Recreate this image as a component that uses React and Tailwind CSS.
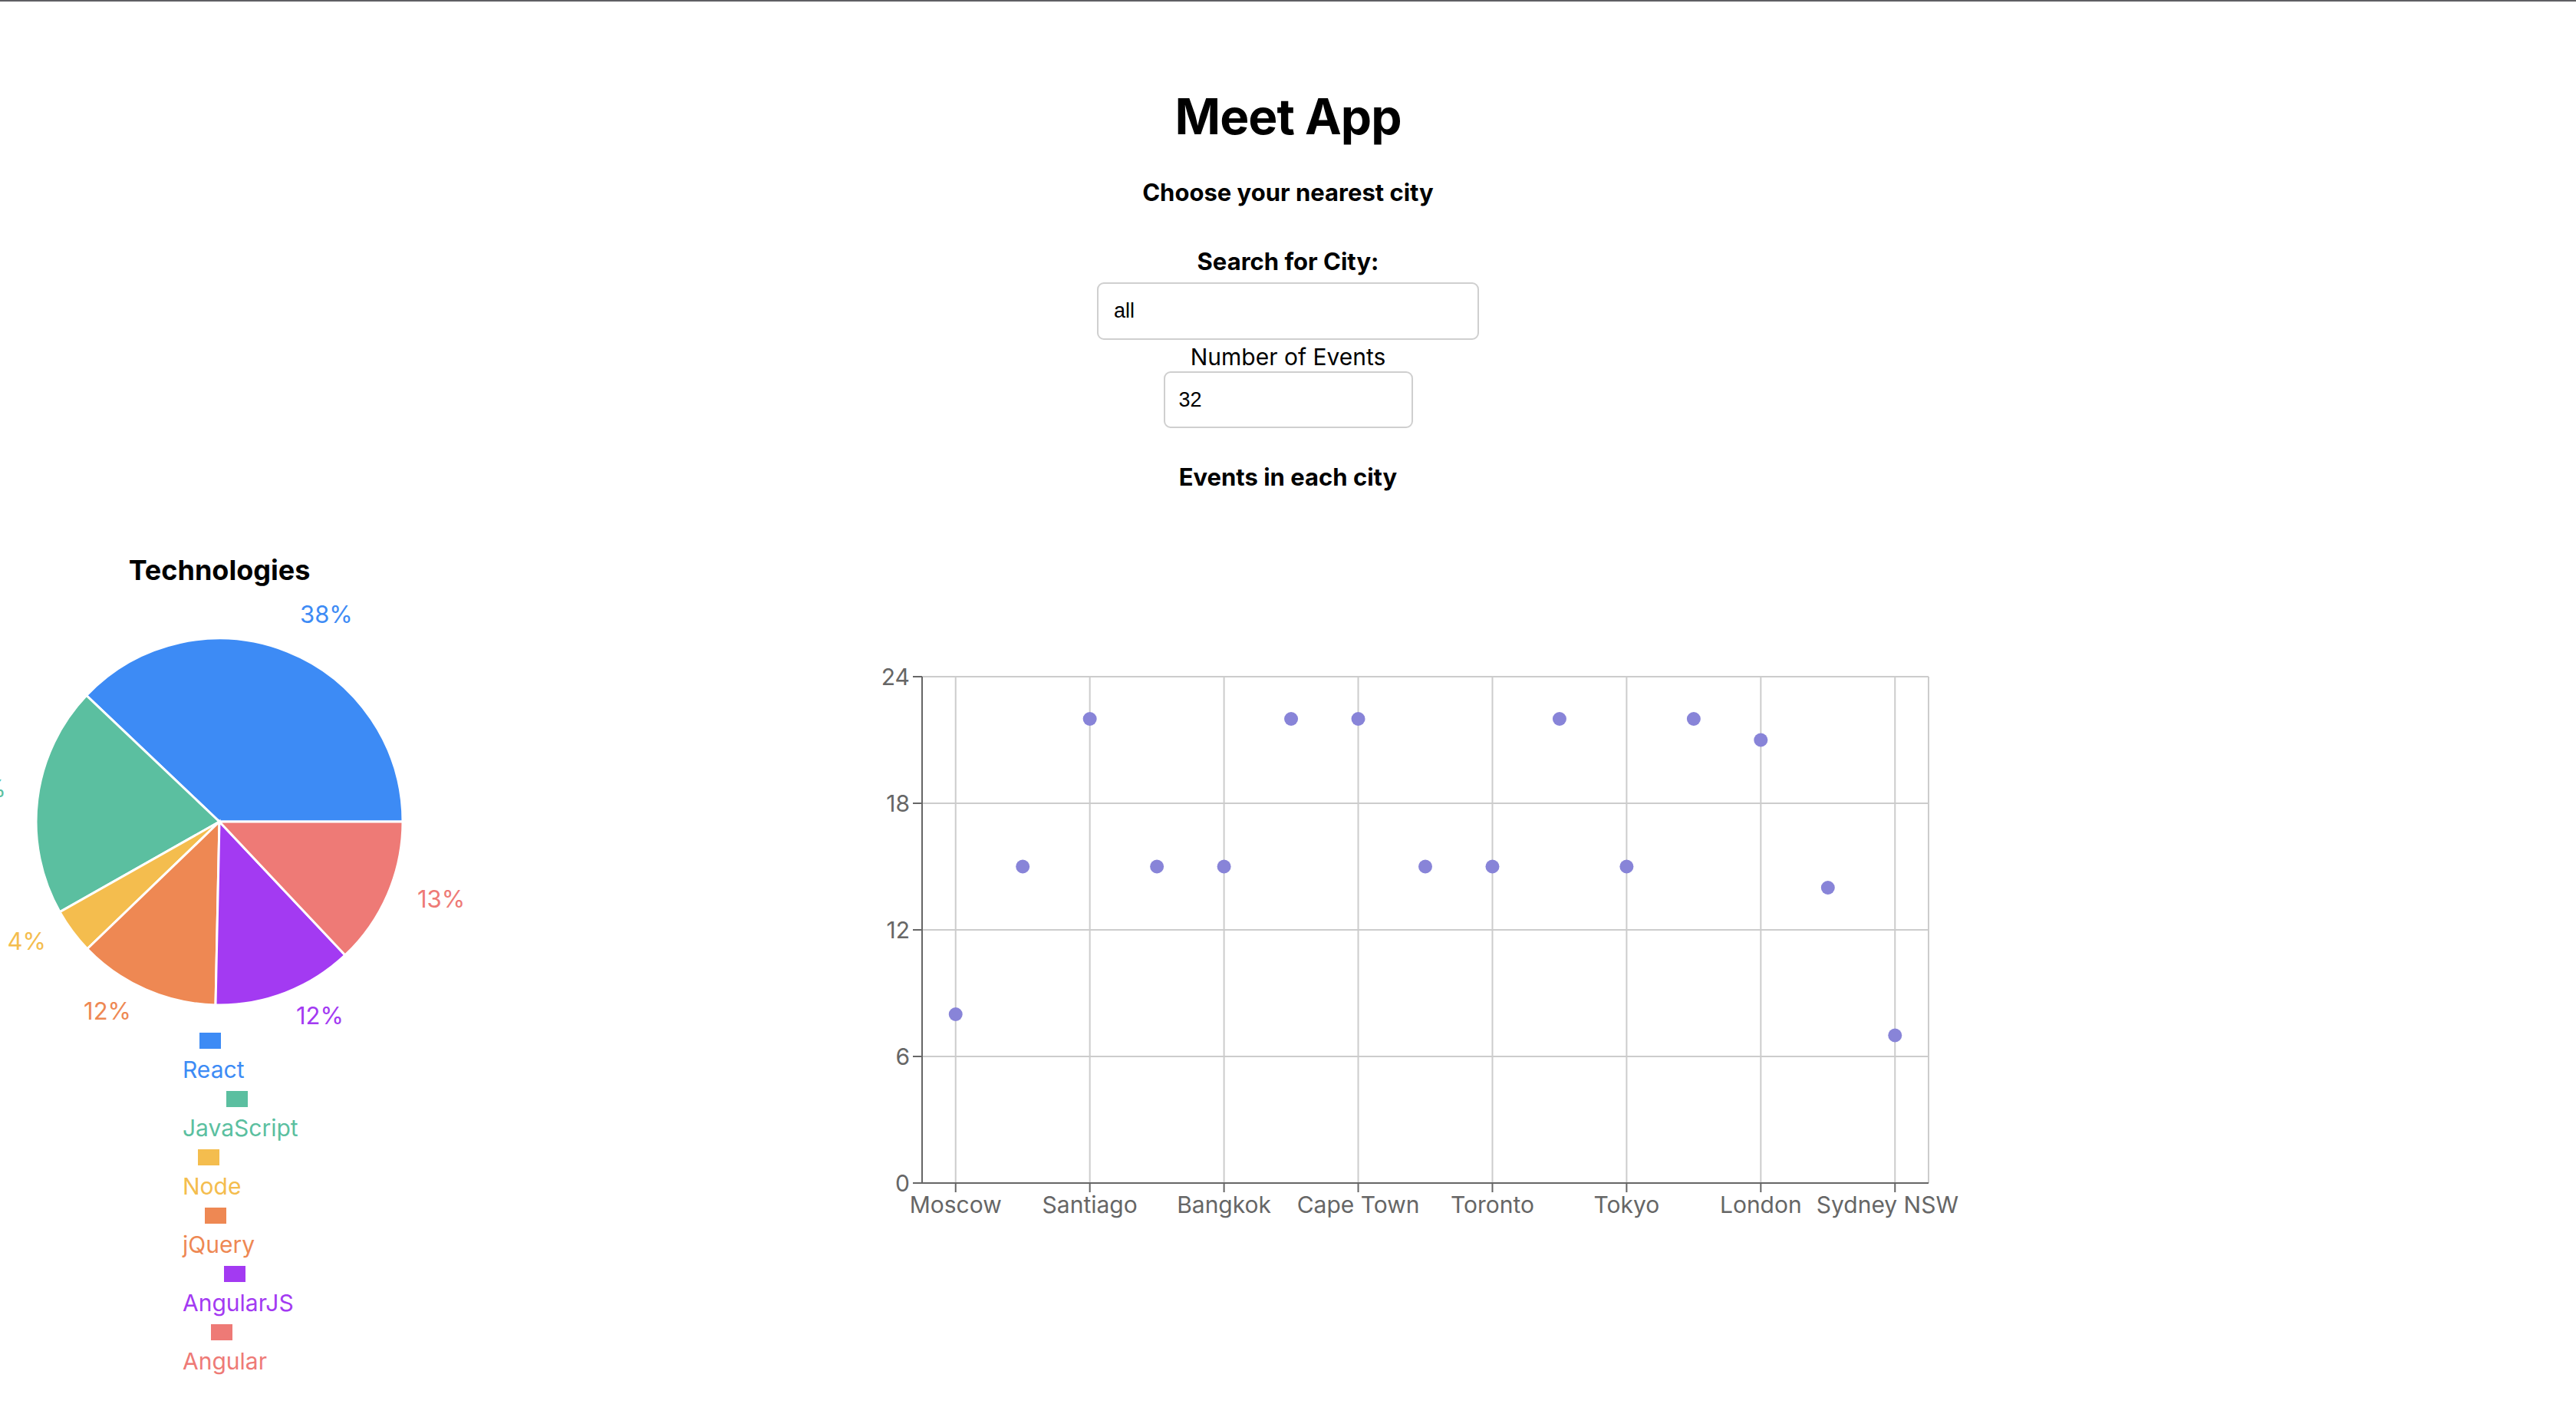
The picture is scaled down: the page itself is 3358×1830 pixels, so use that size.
import React from 'react';

const slices = [
  { name: 'React', pct: '38%', color: '#3d8bf5', from: 0, to: 136.5, lx: 391, ly: 35, anchor: 'start' },
  { name: 'JavaScript', pct: '21%', color: '#5bbfa0', from: 136.5, to: 209.5, lx: 8, ly: 262, anchor: 'end' },
  { name: 'Node', pct: '4%', color: '#f4bd4e', from: 209.5, to: 223.9, lx: 60, ly: 461, anchor: 'end' },
  { name: 'jQuery', pct: '12%', color: '#ee8853', from: 223.9, to: 268.8, lx: 171, ly: 552, anchor: 'end' },
  { name: 'AngularJS', pct: '12%', color: '#a33af2', from: 268.8, to: 313.3, lx: 386, ly: 558, anchor: 'start' },
  { name: 'Angular', pct: '13%', color: '#ee7a76', from: 313.3, to: 360, lx: 544, ly: 406, anchor: 'start' },
];

const cities = [
  { city: 'Moscow', count: 8 },
  { city: 'Berlin', count: 15 },
  { city: 'Santiago', count: 22 },
  { city: 'Dubai', count: 15 },
  { city: 'Bangkok', count: 15 },
  { city: 'Toulouse', count: 22 },
  { city: 'Cape Town', count: 22 },
  { city: 'Seoul', count: 15 },
  { city: 'Toronto', count: 15 },
  { city: 'Lisbon', count: 22 },
  { city: 'Tokyo', count: 15 },
  { city: 'Mumbai', count: 22 },
  { city: 'London', count: 21 },
  { city: 'Munich', count: 14 },
  { city: 'Sydney NSW', count: 7 },
];

const CX = 286;
const CY = 306;
const R = 239;

const point = (deg) => {
  const a = (deg * Math.PI) / 180;
  return [CX + R * Math.cos(a), CY - R * Math.sin(a)];
};

const slicePath = (from, to) => {
  const [x0, y0] = point(from);
  const [x1, y1] = point(to);
  const large = to - from > 180 ? 1 : 0;
  return `M${CX},${CY} L${x0},${y0} A${R},${R} 0 ${large} 0 ${x1},${y1} Z`;
};

const TechPie = () => (
  <svg width="572" height="572" className="block overflow-visible" style={{ fontFamily: 'Inter, sans-serif' }}>
    {slices.map((s) => (
      <path key={s.name} d={slicePath(s.from, s.to)} fill={s.color} stroke="#fff" strokeWidth="3" />
    ))}
    {slices.map((s) => (
      <text key={s.name + '-l'} x={s.lx} y={s.ly} fill={s.color} fontSize="31" textAnchor={s.anchor} dominantBaseline="central">
        {s.pct}
      </text>
    ))}
  </svg>
);

// plot area inside the svg
const X0 = 102;
const X1 = 1414;
const Y0 = 22;
const Y1 = 682;
const step = (X1 - X0) / cities.length;
const xAt = (i) => X0 + step / 2 + i * step;
const yAt = (v) => Y1 - (v / 24) * (Y1 - Y0);

const EventsScatter = () => (
  <svg width="1500" height="740" className="block overflow-visible" style={{ fontFamily: 'Inter, sans-serif' }}>
    {[0, 6, 12, 18, 24].map((v) => (
      <line key={'h' + v} x1={X0} x2={X1} y1={yAt(v)} y2={yAt(v)} stroke="#ccc" strokeWidth="2" />
    ))}
    {cities.map((c, i) =>
      i % 2 === 0 ? <line key={'v' + i} x1={xAt(i)} x2={xAt(i)} y1={Y0} y2={Y1} stroke="#ccc" strokeWidth="2" /> : null
    )}
    <line x1={X1} x2={X1} y1={Y0} y2={Y1} stroke="#ccc" strokeWidth="2" />

    <line x1={X0} x2={X0} y1={Y0} y2={Y1} stroke="#666" strokeWidth="2" />
    <line x1={X0} x2={X1} y1={Y1} y2={Y1} stroke="#666" strokeWidth="2" />
    {[0, 6, 12, 18, 24].map((v) => (
      <g key={'yt' + v}>
        <line x1={X0 - 12} x2={X0} y1={yAt(v)} y2={yAt(v)} stroke="#666" strokeWidth="2" />
        <text x={X0 - 16} y={yAt(v)} fill="#666" fontSize="30" textAnchor="end" dominantBaseline="central">
          {v}
        </text>
      </g>
    ))}
    {cities.map((c, i) => {
      if (i % 2 !== 0) return null;
      const last = i === cities.length - 1;
      return (
        <g key={'xt' + i}>
          <line x1={xAt(i)} x2={xAt(i)} y1={Y1} y2={Y1 + 12} stroke="#666" strokeWidth="2" />
          <text
            x={last ? X1 + 39 : xAt(i)}
            y={Y1 + 28}
            fill="#666"
            fontSize="30"
            textAnchor={last ? 'end' : 'middle'}
            dominantBaseline="central"
          >
            {c.city}
          </text>
        </g>
      );
    })}
    {cities.map((c, i) => (
      <circle key={'d' + i} cx={xAt(i)} cy={yAt(c.count)} r="9" fill="#8884d8" />
    ))}
  </svg>
);

const App = () => {
  return (
    <div className="min-h-screen bg-white text-black font-['Inter',sans-serif]">
      <div className="h-[2px] bg-[#5f5f63]" />

      <div className="flex flex-col items-center text-center">
        <h1 className="mt-[111px] h-[78px] text-[64px] leading-[78px] font-bold tracking-[-1px]">Meet App</h1>
        <h4 className="mt-[40px] h-[40px] text-[31px] leading-[40px] font-bold">Choose your nearest city</h4>

        <label className="mt-[50px] h-[40px] text-[31px] leading-[40px] font-bold">Search for City:</label>
        <input
          type="text"
          defaultValue="all"
          className="mt-[7px] w-[498px] h-[75px] px-[20px] border-2 border-[#cfcfcf] rounded-[9px] text-[27px] font-['Liberation_Sans',sans-serif] outline-none"
        />

        <label className="mt-[3px] h-[38px] text-[30px] leading-[38px]">Number of Events</label>
        <input
          type="text"
          defaultValue="32"
          className="w-[325px] h-[74px] px-[18px] border-2 border-[#cfcfcf] rounded-[9px] text-[27px] font-['Liberation_Sans',sans-serif] outline-none"
        />

        <h4 className="mt-[44px] h-[40px] text-[31px] leading-[40px] font-bold">Events in each city</h4>
      </div>

      <div className="flex items-start">
        <div className="w-[572px] shrink-0 flex flex-col">
          <h3 className="mt-[78px] h-[46px] text-center text-[36px] leading-[46px] font-bold">Technologies</h3>
          <div className="mt-[-1px]">
            <TechPie />
          </div>
          <ul className="ml-[238px] flex flex-col items-start">
            {slices.map((s) => (
              <li key={s.name} className="flex flex-col items-center">
                <span className="h-[38px] flex items-center pr-[8px]">
                  <span className="block w-[28px] h-[21px]" style={{ backgroundColor: s.color }} />
                </span>
                <span className="h-[38px] text-[30px] leading-[38px]" style={{ color: s.color }}>
                  {s.name}
                </span>
              </li>
            ))}
          </ul>
        </div>

        <div className="ml-[528px] mt-[218px]">
          <EventsScatter />
        </div>
      </div>
    </div>
  );
};

export default App;
